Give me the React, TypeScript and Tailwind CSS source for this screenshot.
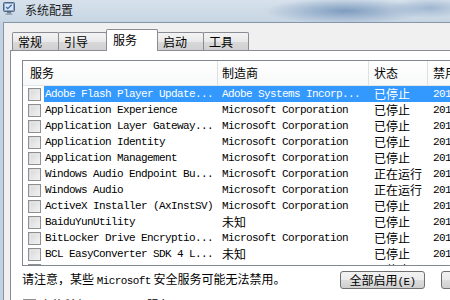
const cjk = "font-['Noto_Sans_CJK_SC','Noto_Sans',sans-serif]";
const mono = "font-['Liberation_Mono','Courier_New',monospace] text-[11px] tracking-[-0.6px]";

type Row = {
  name: string;
  maker: string;
  status: string;
  date: string;
  selected?: boolean;
};

const rows: Row[] = [
  { name: "Adobe Flash Player Update...", maker: "Adobe Systems Incorp...", status: "已停止", date: "2016/3/10", selected: true },
  { name: "Application Experience", maker: "Microsoft Corporation", status: "已停止", date: "2015/7/21" },
  { name: "Application Layer Gateway...", maker: "Microsoft Corporation", status: "已停止", date: "2015/7/21" },
  { name: "Application Identity", maker: "Microsoft Corporation", status: "已停止", date: "2015/7/21" },
  { name: "Application Management", maker: "Microsoft Corporation", status: "已停止", date: "2015/7/21" },
  { name: "Windows Audio Endpoint Bu...", maker: "Microsoft Corporation", status: "正在运行", date: "2015/7/21" },
  { name: "Windows Audio", maker: "Microsoft Corporation", status: "正在运行", date: "2015/7/21" },
  { name: "ActiveX Installer (AxInstSV)", maker: "Microsoft Corporation", status: "已停止", date: "2015/7/21" },
  { name: "BaiduYunUtility", maker: "未知", status: "已停止", date: "2016/2/03" },
  { name: "BitLocker Drive Encryptio...", maker: "Microsoft Corporation", status: "已停止", date: "2015/7/21" },
  { name: "BCL EasyConverter SDK 4 L...", maker: "未知", status: "已停止", date: "2016/1/18" },
  { name: "Block Level Backup Engine...", maker: "Microsoft Corporation", status: "已停止", date: "2015/7/21" },
];

const isCjk = (s: string) => /[\u4e00-\u9fff]/.test(s);

function CheckBox() {
  return (
    <span className="block shrink-0 w-[13px] h-[13px] border border-[#8f8f8f] bg-[linear-gradient(135deg,#d2d2d2,#f6f6f6)] p-px">
      <span className="block w-full h-full border border-[#e8e8e8]" />
    </span>
  );
}

function Tab({ label, width, active }: { label: string; width: string; active?: boolean }) {
  if (active) {
    return (
      <div className={`${width} h-[22px] -ml-px -mb-px relative z-10 border border-b-0 border-[#898c95] bg-white pl-[6px] pt-[1px] text-[12px] leading-[18px] text-black rounded-t-[2px]`}>
        {label}
      </div>
    );
  }
  return (
    <div className={`${width} h-[18px] -ml-px border border-b-0 border-[#898c95] bg-[linear-gradient(to_bottom,#f4f4f4,#e8e8e8_50%,#d9d9d9_51%,#d0d0d0)] pl-[5px] text-[12px] leading-[17px] text-black rounded-t-[2px]`}>
      {label}
    </div>
  );
}

function MsconfigIcon() {
  return (
    <svg width="13" height="13" viewBox="0 0 13 13">
      <rect x="0.5" y="0.5" width="11" height="9" rx="1" fill="#8da5c2" stroke="#4d6785" />
      <rect x="2" y="2" width="8" height="6" fill="#d8e6f5" />
      <path d="M3.2 5 L4.8 6.6 L8.6 2.8" stroke="#3b6aa8" strokeWidth="1.3" fill="none" />
      <rect x="4" y="10" width="4" height="1.5" fill="#6f7f92" />
      <rect x="2.5" y="11.5" width="7" height="1.2" fill="#8c98a6" />
    </svg>
  );
}

const btn =
  "w-[85px] h-[18px] shrink-0 rounded-[3px] border border-[#707070] bg-[linear-gradient(to_bottom,#f2f2f2,#ebebeb_50%,#dddddd_51%,#cfcfcf)] text-[12px] leading-[16px] whitespace-nowrap";

export default function App() {
  return (
    <div className={`w-[450px] h-[300px] overflow-hidden flex flex-col bg-[#c6d5e4] ${cjk}`}>
      {/* title bar */}
      <div className="h-[22px] shrink-0 flex items-start pl-[3px] pt-[2px] bg-[image:radial-gradient(ellipse_80px_13px_at_345px_11px,#7e9cbf,transparent),radial-gradient(ellipse_40px_10px_at_430px_8px,#9fb6d0,transparent),linear-gradient(to_bottom,#d6e1ec,#c7d5e3)]">
        <MsconfigIcon />
        <span className="ml-[9px] text-[12px] leading-[15px] text-[#1b1b1b]">系统配置</span>
      </div>

      <div className="flex flex-1 min-h-0">
        <div className="w-[3px] shrink-0 bg-[#c3d2e1]" />
        <div className="flex-1 min-w-0 border-l border-t border-[#8596ab] bg-[#f0f0f0] pt-[6px] pl-[6px] flex flex-col">
          {/* tabs */}
          <div className="flex items-end h-[21px] pl-[3px]">
            <Tab label="常规" width="w-[47px]" />
            <Tab label="引导" width="w-[49px]" />
            <Tab label="服务" width="w-[52px]" active />
            <Tab label="启动" width="w-[47px]" />
            <Tab label="工具" width="w-[46px]" />
          </div>

          {/* panel */}
          <div className="flex-1 min-w-0 border-l border-t border-[#898c95] bg-white pl-[11px] pt-[9px] text-black">
            <div className="w-[470px] h-[206px] border border-[#828790] overflow-hidden">
              <div className="flex h-[25px] border-b border-[#e5e5e5] bg-[linear-gradient(to_bottom,#ffffff,#f7f8f9)] text-[12px] leading-[24px]">
                <div className="w-[195px] shrink-0 border-r border-[#e0e0e0] pl-[7px]">服务</div>
                <div className="w-[151px] shrink-0 border-r border-[#e0e0e0] pl-[4px]">制造商</div>
                <div className="w-[59px] shrink-0 border-r border-[#e0e0e0] pl-[5px]">状态</div>
                <div className="flex-1 pl-[5px] whitespace-nowrap">禁用日期</div>
              </div>
              {rows.map((r) => {
                const sel = r.selected ? "bg-[#3399ff] text-white" : "";
                return (
                  <div key={r.name} className="flex h-[16px] items-center">
                    <div className="w-[21px] shrink-0 h-full flex items-center pl-[5px]">
                      <CheckBox />
                    </div>
                    <div className={`flex flex-1 h-full items-center ${sel}`}>
                      <div className={`w-[174px] shrink-0 pl-[1px] whitespace-nowrap overflow-hidden ${mono}`}>{r.name}</div>
                      <div className={`w-[151px] shrink-0 pl-[4px] whitespace-nowrap overflow-hidden ${isCjk(r.maker) ? "text-[12px]" : mono}`}>{r.maker}</div>
                      <div className="w-[59px] shrink-0 pl-[5px] whitespace-nowrap text-[12px]">{r.status}</div>
                      <div className={`flex-1 pl-[5px] whitespace-nowrap ${mono}`}>{r.date}</div>
                    </div>
                  </div>
                );
              })}
            </div>

            {/* notice + buttons */}
            <div className="flex items-center h-[18px] mt-[5px] w-[520px]">
              <div className="w-[318px] shrink-0 text-[12px] whitespace-nowrap">
                请注意，某些 <span className={mono}>Microsoft</span> 安全服务可能无法禁用。
              </div>
              <button className={btn}>
                全部启用<span className={mono}>(E)</span>
              </button>
              <button className={`${btn} ml-[16px]`}>
                全部禁用<span className={mono}>(D)</span>
              </button>
            </div>

            <div className="flex items-center mt-[7px] ml-px gap-[3px]">
              <CheckBox />
              <span className="text-[12px] whitespace-nowrap">
                隐藏所有 <span className={mono}>Microsoft</span> 服务<span className={mono}>(H)</span>
              </span>
            </div>
          </div>
        </div>
      </div>
    </div>
  );
}
